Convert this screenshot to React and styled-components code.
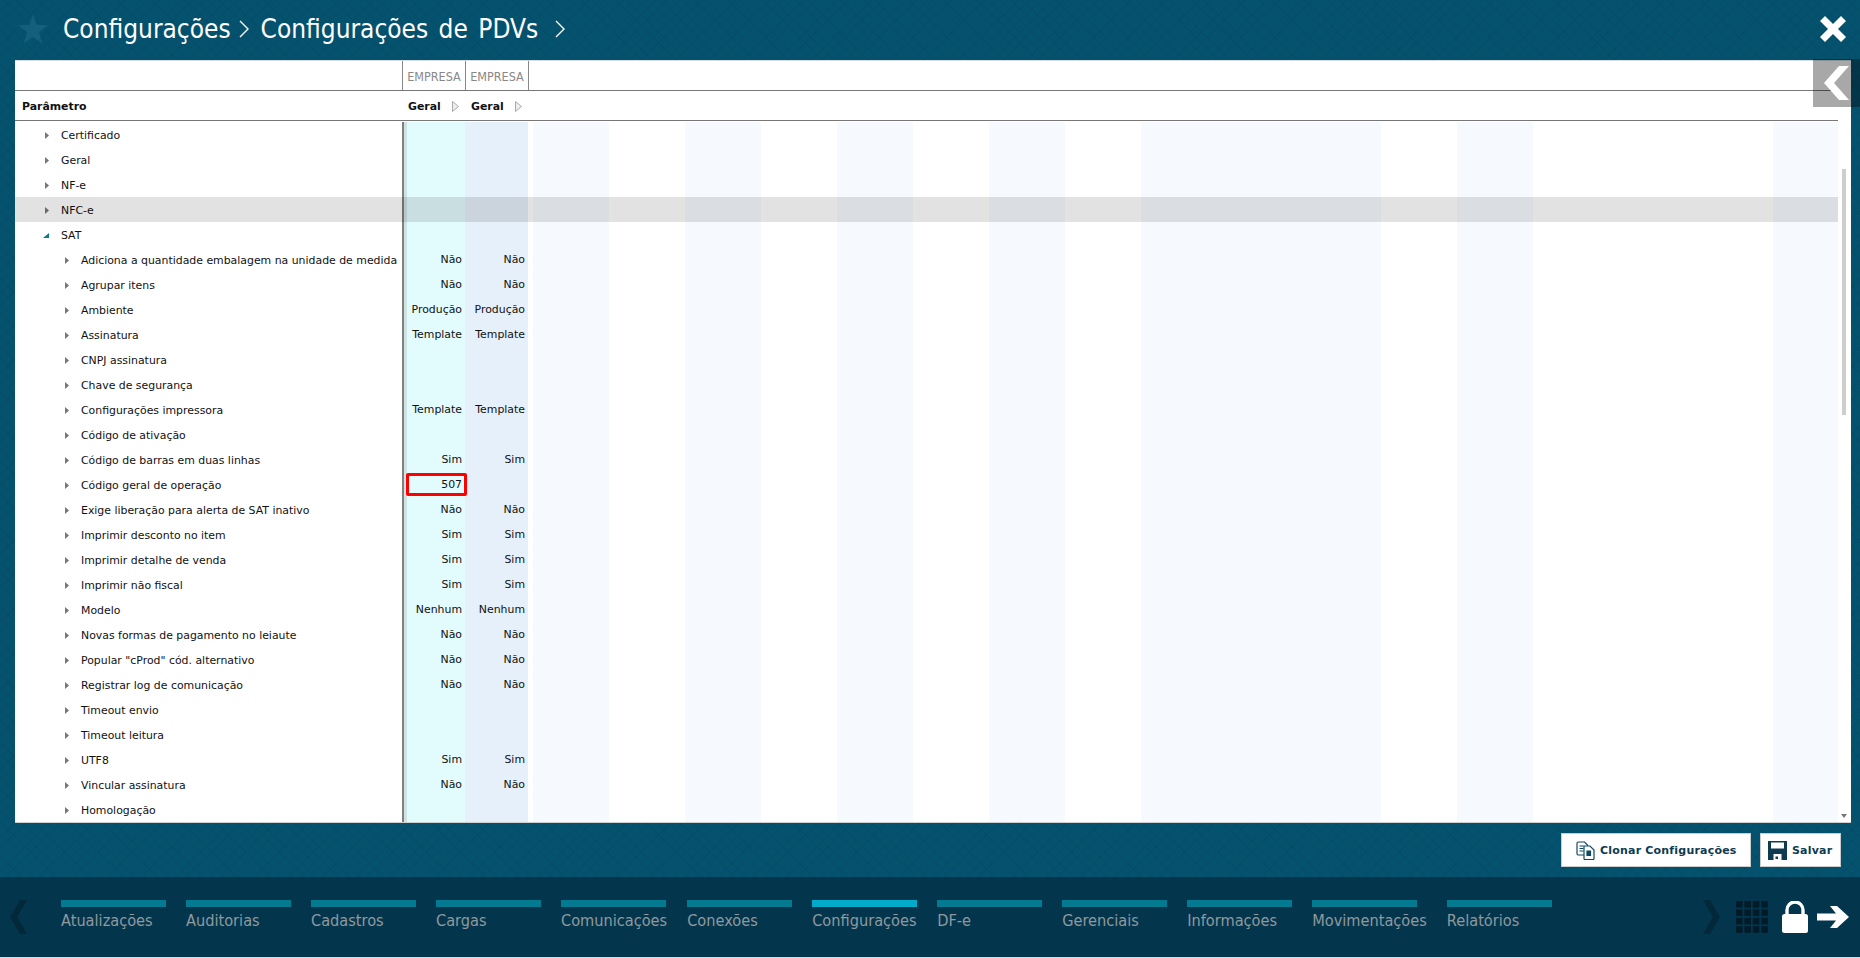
import React from 'react';
import styled, { createGlobalStyle } from 'styled-components';

const Global = createGlobalStyle`
  html, body { margin: 0; padding: 0; background: #05526f; }
  * { box-sizing: border-box; }
`;

const TEXT_FONT = '"DejaVu Sans", Verdana, sans-serif';
const NARROW_FONT = '"DejaVu Sans Condensed", "DejaVu Sans", sans-serif';

const Page = styled.div`
  position: relative;
  width: 1860px;
  height: 958px;
  overflow: hidden;
  display: flex;
  flex-direction: column;
  background-color: #05526f;
  background-image:
    repeating-linear-gradient(45deg, rgba(0, 0, 0, 0.045) 0 1px, transparent 1px 8px),
    repeating-linear-gradient(-45deg, rgba(0, 0, 0, 0.045) 0 1px, transparent 1px 8px);
`;

const Header = styled.header`
  height: 60px;
  display: flex;
  align-items: center;
  padding: 0 0 2px 18px;
  color: #fff;
  font-family: ${NARROW_FONT};
  font-size: 26px;
  word-spacing: 3px;
`;

const Crumb = styled.span`
  margin-left: ${(p) => p.$gap}px;
  white-space: nowrap;
`;

const CloseButton = styled.button`
  margin-left: auto;
  margin-right: 14px;
  padding: 0;
  border: 0;
  background: none;
  display: flex;
`;

const Panel = styled.section`
  position: relative;
  height: 763px;
  margin: 0 9px 0 15px;
  background: #fff;
  border-top: 1px solid #d5dde0;
  border-bottom: 1px solid #d0d0d0;
  display: flex;
  flex-direction: column;
  font-family: ${TEXT_FONT};
  font-size: 10.9px;
  color: #111;
`;

const SourceRow = styled.div`
  height: 30px;
  margin-right: 13px;
  display: flex;
  border-bottom: 1px solid #777;
  padding-left: 387px;
`;

const SourceCell = styled.div`
  width: 63px;
  border-left: 1px solid #888;
  font-family: ${NARROW_FONT};
  font-size: 12.5px;
  color: #888;
  line-height: 31px;
  text-align: center;
  &:last-child {
    border-right: 1px solid #888;
    width: 64px;
  }
`;

const TitleRow = styled.div`
  height: 30px;
  margin-right: 13px;
  padding-top: 1px;
  display: flex;
  align-items: center;
  border-bottom: 1px solid #777;
  font-weight: 700;
`;

const ParamHead = styled.div`
  width: 393px;
  padding-left: 7px;
`;

const ColHead = styled.div`
  width: 63px;
  display: flex;
  align-items: center;
  gap: 11px;
`;

const Body = styled.div`
  flex: 1;
  overflow: hidden;
  margin-right: 13px;
  padding-top: 1px;
`;

const Row = styled.div`
  position: relative;
  height: 25px;
  display: flex;
  ${(p) =>
    p.$active &&
    `&::after {
      content: '';
      position: absolute;
      inset: 0;
      background: rgba(0, 0, 0, 0.115);
    }`}
`;

const Label = styled.div`
  width: 387px;
  flex: none;
  display: flex;
  align-items: center;
  padding-top: 2px;
  padding-left: ${(p) => (p.$level === 2 ? 50 : 30)}px;
  white-space: nowrap;
`;

const Arrow = styled.i`
  width: ${(p) => (p.$open ? 6 : 4)}px;
  height: ${(p) => (p.$open ? 5 : 7)}px;
  margin-right: 12px;
  margin-left: ${(p) => (p.$open ? -2 : 0)}px;
  background: ${(p) => (p.$open ? '#0b7c8e' : '#777')};
  clip-path: ${(p) =>
    p.$open ? 'polygon(100% 0, 100% 100%, 0 100%)' : 'polygon(0 0, 100% 50%, 0 100%)'};
`;

const Rule = styled.div`
  width: 5px;
  flex: none;
  background: linear-gradient(to right, #808080 0 2px, #cfe3e3 2px);
`;

const ValueCell = styled.div`
  position: relative;
  flex: none;
  width: ${(p) => p.$width}px;
  background: ${(p) => p.$bg};
  text-align: right;
  padding: 6px 3px 0 0;
  white-space: nowrap;
`;

const Marker = styled.span`
  position: absolute;
  z-index: 1;
  left: -1px;
  top: 1px;
  width: 61px;
  height: 23px;
  border: 3px solid #f00;
  border-radius: 2px;
`;

const Band = styled.div`
  flex: none;
  width: ${(p) => p.$width}px;
  background: ${(p) => (p.$tint ? '#f6fafe' : '#fff')};
`;

const ScrollThumb = styled.div`
  position: absolute;
  left: 1827px;
  top: 108px;
  width: 4px;
  height: 246px;
  background: #cdcdcd;
`;

const ScrollDown = styled.div`
  position: absolute;
  right: 4px;
  bottom: 4px;
  width: 0;
  height: 0;
  border-left: 3px solid transparent;
  border-right: 3px solid transparent;
  border-top: 4px solid #777;
`;

const SideHandle = styled.button`
  position: absolute;
  right: 0;
  top: 59px;
  width: 47px;
  height: 48px;
  padding: 0 0 0 11px;
  border: 0;
  background: rgba(0, 0, 0, 0.34);
  display: flex;
  align-items: center;
`;

const Actions = styled.div`
  height: 54px;
  display: flex;
  justify-content: flex-end;
  align-items: flex-start;
  gap: 9px;
  padding: 10px 19px 0 0;
`;

const ActionButton = styled.button`
  height: 34px;
  width: ${(p) => p.$width}px;
  padding: 0 0 0 ${(p) => p.$pad}px;
  display: flex;
  align-items: center;
  gap: ${(p) => p.$gap}px;
  background: #fff;
  border: 1px solid #ccc;
  font-family: ${TEXT_FONT};
  font-size: 11px;
  letter-spacing: 0.2px;
  font-weight: 700;
  color: #0e3b50;
  white-space: nowrap;
`;

const Footer = styled.footer`
  height: 80px;
  margin-bottom: 1px;
  display: flex;
  align-items: flex-start;
  background: #03364d;
  padding-top: 23px;
  box-shadow: 0 1px 0 #cfdcdc;
`;

const Pager = styled.div`
  flex: none;
  margin: ${(p) => p.$margin};
  display: flex;
`;

const Tabs = styled.nav`
  display: flex;
  gap: 20px;
`;

const Tab = styled.a`
  min-width: 105px;
  display: flex;
  flex-direction: column;
  font-family: ${NARROW_FONT};
  font-size: 16.2px;
  line-height: 27px;
  color: #8f999e;
  white-space: nowrap;
  &::before {
    content: '';
    display: block;
    width: 105px;
    height: 7px;
    background: ${(p) => (p.$active ? '#00acca' : '#047a91')};
  }
`;

const FooterTools = styled.div`
  margin-left: auto;
  padding-right: 11px;
  display: flex;
  align-items: center;
`;

const ToolIcon = styled.span`
  display: flex;
  margin-left: ${(p) => p.$gap}px;
`;

const Chevron = () => (
  <svg width="10" height="18" viewBox="0 0 10 18">
    <polyline points="1,1 9,9 1,17" fill="none" stroke="#fff" strokeWidth="1.4" />
  </svg>
);

const Star = () => (
  <svg width="30" height="30" viewBox="0 0 30 30">
    <polygon
      points="15,0 18.6,10.8 30,11.2 21,18.2 24.2,29.5 15,23 5.8,29.5 9,18.2 0,11.2 11.4,10.8"
      fill="#14607c"
    />
  </svg>
);

const CloseIcon = () => (
  <svg width="26" height="26" viewBox="0 0 26 26">
    <path d="M5 0l8 8 8-8 5 5-8 8 8 8-5 5-8-8-8 8-5-5 8-8-8-8z" fill="#fff" />
  </svg>
);

const SideChevron = () => (
  <svg width="25" height="34" viewBox="0 0 25 34">
    <polygon points="15,0 25,0 10,17 25,34 15,34 0,17" fill="#fff" />
  </svg>
);

const CloneIcon = () => (
  <svg width="19" height="19" viewBox="0 0 19 19" fill="none" stroke="#0e4a62" strokeWidth="1.2">
    <path d="M2.500 1h6l3 3v10h-9a1.500 1.500 0 0 1-1.500-1.500v-10A1.500 1.500 0 0 1 2.500 1z" fill="#fff" />
    <path d="M3.500 5h4M3.500 7.500h4M3.500 10h4" />
    <path d="M8 5h6l4 4v8.500a1 1 0 0 1-1 1H9a1 1 0 0 1-1-1z" fill="#fff" />
    <path d="M11 10h3.500v4.500H11z" fill="#0e4a62" />
  </svg>
);

const SaveIcon = () => (
  <svg width="19" height="19" viewBox="0 0 19 19">
    <path
      d="M0 0h19v19H0zM3 1.500v6h13v-6zM5.500 13v6h8v-6z"
      fill="#0e3b50"
      fillRule="evenodd"
    />
    <rect x="7.500" y="15.500" width="2.500" height="2.500" fill="#0e3b50" />
  </svg>
);

const HeadTriangle = () => (
  <svg width="7" height="11" viewBox="0 0 7 11">
    <polygon points="0.5,0.5 6.500,5.500 0.5,10.500" fill="#eee" stroke="#aaa" />
  </svg>
);

const PagerIcon = ({ left }) => (
  <svg width="17" height="34" viewBox="0 0 17 34">
    <polygon
      points={left ? '10,0 17,0 7,17 17,34 10,34 0,17' : '0,0 7,0 17,17 7,34 0,34 10,17'}
      fill="#02283a"
    />
  </svg>
);

const GridIcon = () => (
  <svg width="32" height="32" viewBox="0 0 32 32" fill="#011c28">
    {[0, 8.4, 16.8, 25.2].map((y) =>
      [0, 8.4, 16.8, 25.2].map((x) => (
        <rect key={`${x}-${y}`} x={x} y={y} width="6.6" height="6.6" />
      ))
    )}
  </svg>
);

const LockIcon = () => (
  <svg width="26" height="32" viewBox="0 0 26 32">
    <path d="M5 14V9a8 8 0 0 1 16 0v5" fill="none" stroke="#fff" strokeWidth="3.4" />
    <rect x="0" y="13" width="26" height="19" rx="2.5" fill="#fff" />
  </svg>
);

const GoIcon = () => (
  <svg width="32" height="22" viewBox="0 0 32 22">
    <path d="M0 7.500h19L13 0h7l12 11-12 11h-7l6-7.500H0z" fill="#fff" />
  </svg>
);

const ROWS = [
  ['Certificado', 1],
  ['Geral', 1],
  ['NF-e', 1],
  ['NFC-e', 1],
  ['SAT', 1],
  ['Adiciona a quantidade embalagem na unidade de medida', 2, 'Não', 'Não'],
  ['Agrupar itens', 2, 'Não', 'Não'],
  ['Ambiente', 2, 'Produção', 'Produção'],
  ['Assinatura', 2, 'Template', 'Template'],
  ['CNPJ assinatura', 2],
  ['Chave de segurança', 2],
  ['Configurações impressora', 2, 'Template', 'Template'],
  ['Código de ativação', 2],
  ['Código de barras em duas linhas', 2, 'Sim', 'Sim'],
  ['Código geral de operação', 2, '507', ''],
  ['Exige liberação para alerta de SAT inativo', 2, 'Não', 'Não'],
  ['Imprimir desconto no item', 2, 'Sim', 'Sim'],
  ['Imprimir detalhe de venda', 2, 'Sim', 'Sim'],
  ['Imprimir não fiscal', 2, 'Sim', 'Sim'],
  ['Modelo', 2, 'Nenhum', 'Nenhum'],
  ['Novas formas de pagamento no leiaute', 2, 'Não', 'Não'],
  ['Popular "cProd" cód. alternativo', 2, 'Não', 'Não'],
  ['Registrar log de comunicação', 2, 'Não', 'Não'],
  ['Timeout envio', 2],
  ['Timeout leitura', 2],
  ['UTF8', 2, 'Sim', 'Sim'],
  ['Vincular assinatura', 2, 'Não', 'Não'],
  ['Homologação', 2],
];

// empty config columns to the right of the two EMPRESA ones
const BANDS = [
  [5, false], [76, true], [76, false], [76, true], [76, false], [76, true], [76, false],
  [76, true], [76, false], [240, true], [76, false], [76, true], [240, false], [65, true],
];

const TABS = [
  'Atualizações', 'Auditorias', 'Cadastros', 'Cargas', 'Comunicações', 'Conexões',
  'Configurações', 'DF-e', 'Gerenciais', 'Informações', 'Movimentações', 'Relatórios',
];

export default function App() {
  return (
    <Page>
      <Global />
      <Header>
        <Star />
        <Crumb $gap={15}>Configurações</Crumb>
        <Crumb $gap={8}><Chevron /></Crumb>
        <Crumb $gap={12}>Configurações de PDVs</Crumb>
        <Crumb $gap={17}><Chevron /></Crumb>
        <CloseButton><CloseIcon /></CloseButton>
      </Header>

      <Panel>
        <SourceRow>
          <SourceCell>EMPRESA</SourceCell>
          <SourceCell>EMPRESA</SourceCell>
        </SourceRow>
        <TitleRow>
          <ParamHead>Parâmetro</ParamHead>
          <ColHead>Geral <HeadTriangle /></ColHead>
          <ColHead>Geral <HeadTriangle /></ColHead>
        </TitleRow>
        <Body>
          {ROWS.map(([name, level, a, b]) => (
            <Row key={name} $active={name === 'NFC-e'}>
              <Label $level={level}>
                <Arrow $open={name === 'SAT'} />
                {name}
              </Label>
              <Rule />
              <ValueCell $width={58} $bg="#e2fbfd">
                {a}
                {a === '507' && <Marker />}
              </ValueCell>
              <ValueCell $width={63} $bg="#e5f0fa">{b}</ValueCell>
              {BANDS.map(([width, tint], i) => (
                <Band key={i} $width={width} $tint={tint} />
              ))}
            </Row>
          ))}
        </Body>
        <ScrollThumb />
        <ScrollDown />
      </Panel>

      <SideHandle><SideChevron /></SideHandle>

      <Actions>
        <ActionButton $width={190} $pad={14} $gap={5}>
          <CloneIcon /> Clonar Configurações
        </ActionButton>
        <ActionButton $width={81} $pad={7} $gap={5}>
          <SaveIcon /> Salvar
        </ActionButton>
      </Actions>

      <Footer>
        <Pager $margin="0 34px 0 10px"><PagerIcon left /></Pager>
        <Tabs>
          {TABS.map((tab) => (
            <Tab key={tab} $active={tab === 'Configurações'}>{tab}</Tab>
          ))}
        </Tabs>
        <FooterTools>
          <PagerIcon />
          <ToolIcon $gap={16}><GridIcon /></ToolIcon>
          <ToolIcon $gap={14}><LockIcon /></ToolIcon>
          <ToolIcon $gap={9}><GoIcon /></ToolIcon>
        </FooterTools>
      </Footer>
    </Page>
  );
}
